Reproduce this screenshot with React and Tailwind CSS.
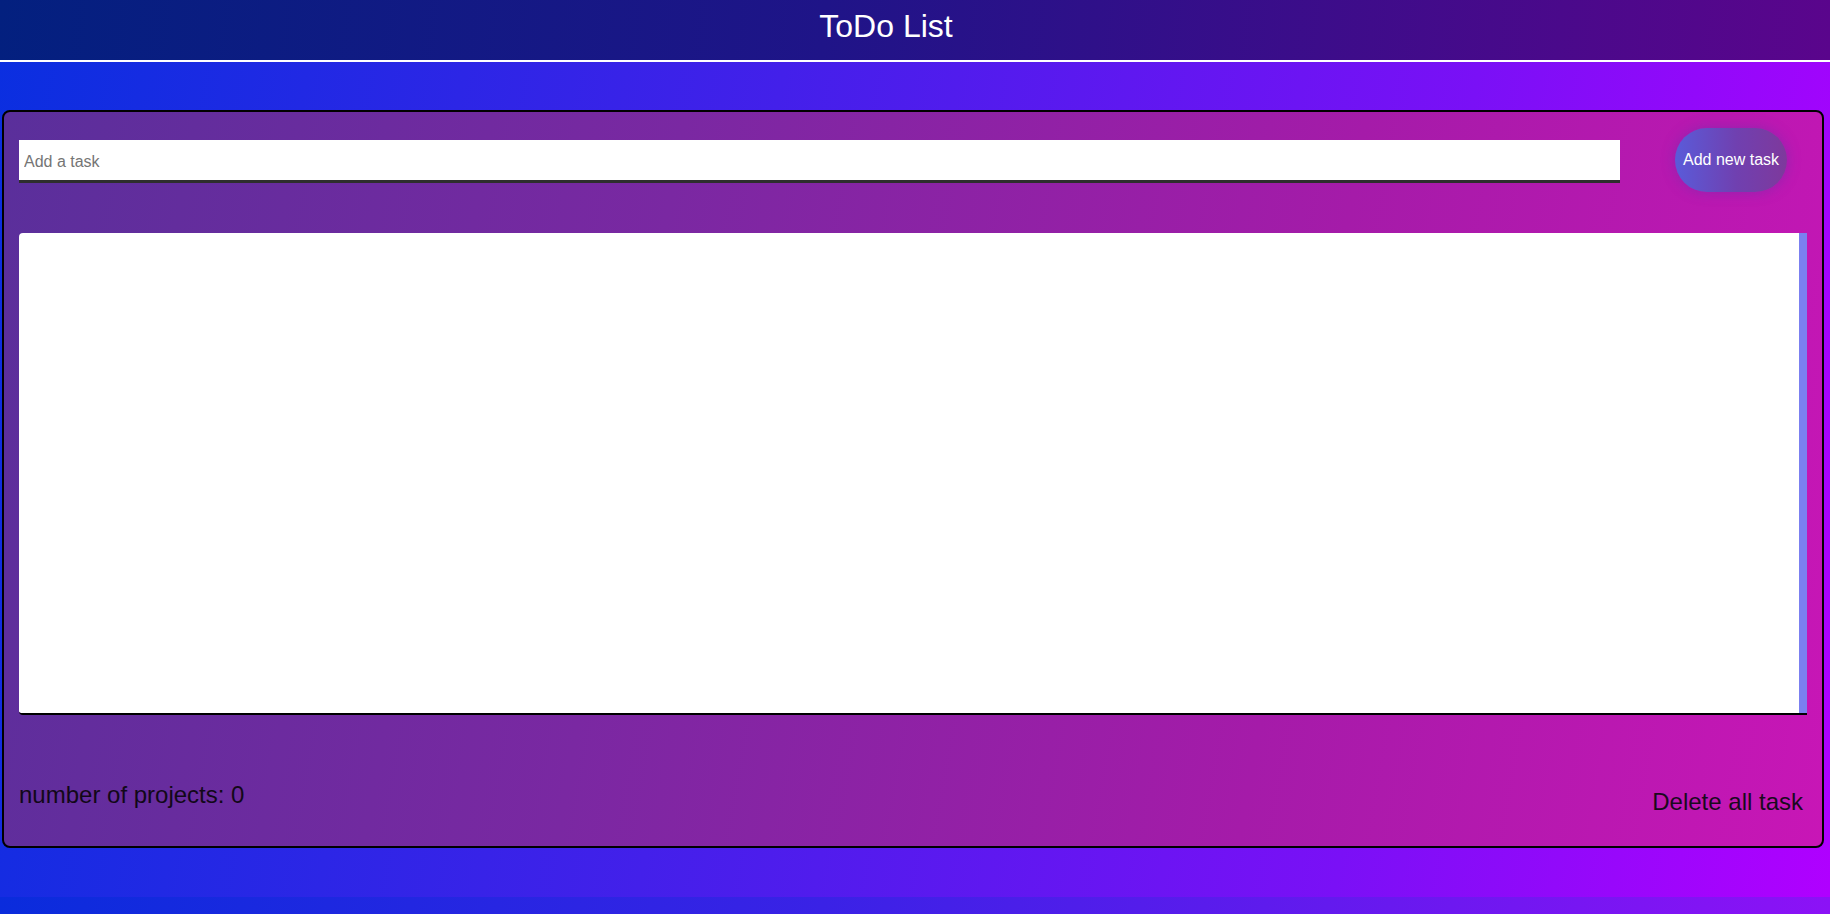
import React, { useState } from "react";

export default function App() {
  const [task, setTask] = useState("");
  const [tasks, setTasks] = useState([]);

  const addTask = () => {
    if (!task.trim()) return;
    setTasks((t) => [...t, task.trim()]);
    setTask("");
  };

  return (
    <div className="w-full h-[914px] flex flex-col font-['Liberation_Sans',Arial,sans-serif]">
      {/* page body */}
      <div className="h-[897px] flex flex-col bg-[linear-gradient(100deg,#0a2fe0_0%,#4320ea_40%,#7a10f6_75%,#b000ff_100%)]">
        {/* header */}
        <header className="h-[62px] border-b-2 border-white flex justify-center pt-[8px] pr-[58px] bg-[linear-gradient(95deg,#03207f_0%,#1f1488_45%,#5a058c_100%)]">
          <h1 className="text-[32px] leading-[36px] text-white">ToDo List</h1>
        </header>

        {/* card */}
        <main className="pt-[48px] pl-[2px] pr-[6px]">
          <section className="h-[738px] border-2 border-black rounded-[8px] px-[15px] pt-[16px] bg-[linear-gradient(100deg,#5a2f9b_0%,#7a28a2_35%,#a51ba9_70%,#c816b6_100%)]">
            <div className="flex items-start h-[64px]">
              <input
                value={task}
                onChange={(e) => setTask(e.target.value)}
                placeholder="Add a task"
                className="mt-[12px] w-[1601px] h-[43px] bg-white border-b-[3px] border-[#2e2e2e] px-[5px] pt-[3px] text-[16px] text-black placeholder:text-[#757575] outline-none"
              />
              <button
                onClick={addTask}
                className="ml-[55px] w-[112px] h-[64px] rounded-full text-white text-[16px] bg-[linear-gradient(90deg,#5a5bd9_0%,#7040b0_55%,#7e399c_100%)] shadow-[0_0_14px_rgba(90,50,170,0.45)]"
              >
                Add new task
              </button>
            </div>

            {/* task list */}
            <div className="mt-[41px] h-[482px] flex border-b-2 border-black rounded-l-[4px] overflow-hidden w-[1788px]">
              <ul className="flex-1 bg-white">
                {tasks.map((t, i) => (
                  <li key={i} className="px-3 py-2 text-[18px]">{t}</li>
                ))}
              </ul>
              <div className="w-[8px] bg-[#7b80f0]" />
            </div>

            {/* footer */}
            <div className="mt-[66px] flex justify-between items-start w-[1788px]">
              <p className="text-[24px] leading-[27px] text-[#120818]">
                number of projects: {tasks.length}
              </p>
              <button
                onClick={() => setTasks([])}
                className="mt-[7px] mr-[4px] text-[24px] leading-[27px] text-[#1a0a1e]"
              >
                Delete all task
              </button>
            </div>
          </section>
        </main>
      </div>
      <div className="h-[17px] bg-[linear-gradient(100deg,#0a2cdc_0%,#3a22e6_45%,#8c12f6_100%)]" />
    </div>
  );
}
